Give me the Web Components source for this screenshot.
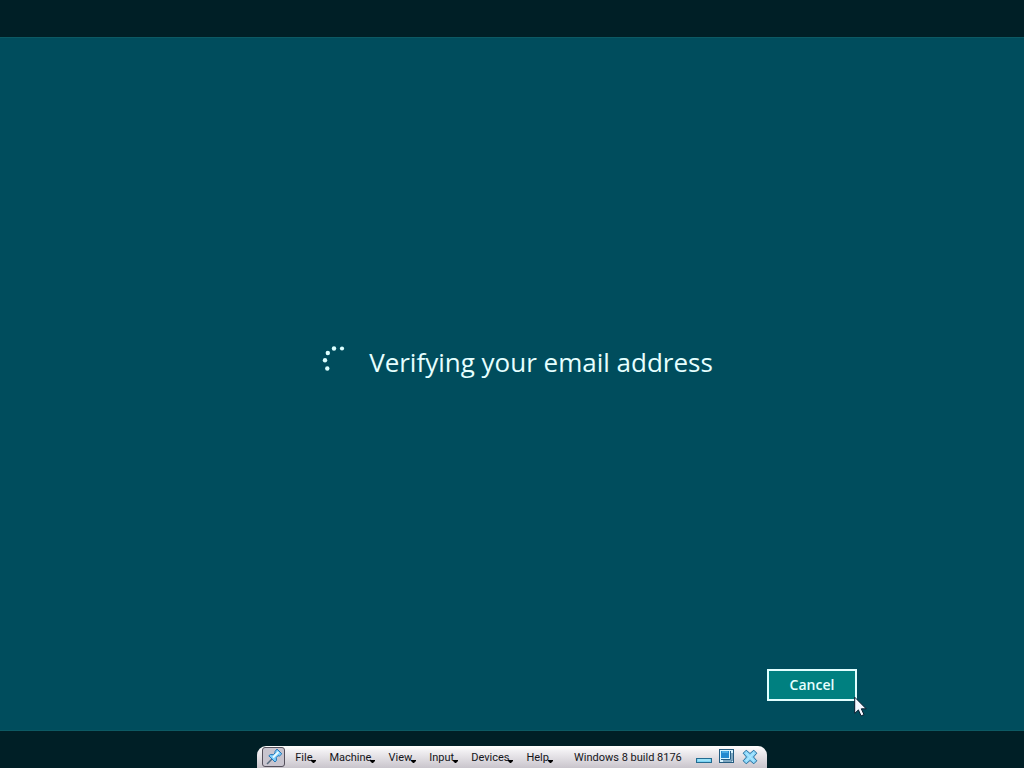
<!DOCTYPE html>
<html lang="en">
<head>
<meta charset="utf-8">
<title>Windows 8 build 8176</title>
<style>
html, body { height: 100%; margin: 0; }
body { background: #004d5d; overflow: hidden; }
</style>
</head>
<body>
<setup-screen></setup-screen>
<script>
const define = (name, html, setup) => customElements.define(name, class extends HTMLElement {
  constructor() {
    super();
    this.attachShadow({ mode: 'open' }).innerHTML = html;
    if (setup) setup(this);
  }
});

define('progress-ring', `
<style>
:host { display: block; flex: none; width: 48px; height: 40px; }
svg { display: block; fill: #dcffff; }
</style>
<svg width="48" height="40" viewBox="0 0 48 40" role="img" aria-label="In progress">
  <circle cx="31" cy="6.5" r="2.1"/><circle cx="23" cy="6.5" r="2.2"/>
  <circle cx="16.8" cy="11" r="2.2"/><circle cx="14" cy="18.2" r="2.2"/>
  <circle cx="16.3" cy="26.5" r="2.2"/>
</svg>`);

define('status-message', `
<style>
:host { display: flex; align-items: center; justify-content: center; gap: 10px; }
h1 { margin: 0; font: 400 26px/40px "Open Sans", "Noto Sans", sans-serif; color: #e6ffff; white-space: nowrap; }
</style>
<progress-ring></progress-ring><h1><slot></slot></h1>`);

define('action-button', `
<style>
:host { display: block; position: relative; }
button { display: block; min-width: 90px; height: 32px; padding: 0 16px; border: 2px solid #e0ffff;
  background: #008080; color: #e6ffff; font: 600 14px/28px "Open Sans", "Noto Sans", sans-serif; }
svg { position: absolute; left: calc(100% - 3px); top: 27px; }
</style>
<button type="button"><slot></slot></button>
<svg width="13" height="21" viewBox="0 0 13 21" aria-hidden="true">
  <path d="M.7 1.2v16.2l3.7-3.5 2.7 6 2.9-1.3-2.7-5.8h4.9z" fill="#f4f8ff" stroke="#061a2c" stroke-width="1"/>
</svg>`);

define('menu-button', `
<style>
:host { display: block; }
button { display: flex; align-items: flex-end; padding: 0; border: 0; background: none; color: #15151a;
  font: 11px/20px Roboto, "DejaVu Sans", sans-serif; }
svg { margin: 0 0 5px -1px; }
</style>
<button type="button" aria-haspopup="menu"><slot></slot><svg width="5" height="3" viewBox="0 0 5 3" aria-hidden="true"><path d="M0 0h5v1L3 3H2L0 1z" fill="#000"/></svg></button>`);

const icons = {
  pin: `<svg width="18" height="18" viewBox="0 0 18 18"><path d="M2 16 7 11" stroke="#566b7d" stroke-width="1.5"/><path d="m10 3.500 2-2.500 4.800 4.800-2.300 2.200-1.500-.3-1.700 1.800.2 2.800-1.500 1.700-6.200-6.200L5.500 6.500l2.800.2L10 5z" fill="#7bccfa" stroke="#2478b9" stroke-linejoin="round"/><path d="m8 9.500 5.500-5.500" stroke="#e8faff" stroke-width="2"/></svg>`,
  minimize: `<svg width="16" height="16" viewBox="0 0 16 16"><rect x=".5" y="9.500" width="15" height="4" fill="#7bd3f4" stroke="#236b91"/><path d="M2 11h12" stroke="#b9f1ff"/></svg>`,
  restore: `<svg width="16" height="16" viewBox="0 0 16 16"><rect x=".5" y=".5" width="14" height="13" fill="#d8f4ff" stroke="#245b80"/><rect x="2" y="2" width="8" height="7" fill="#2389cf"/><path d="M3 3h6" stroke="#73cdf5"/><path d="M11.500 2v8.500H2M4 12h9V4" fill="none" stroke="#285f86"/></svg>`,
  close: `<svg width="16" height="16" viewBox="0 0 16 16"><path d="m4.200 1.200 3.800 3.300 3.800-3.300 3 3L11.500 8l3.300 3.800-3 3L8 11.500l-3.800 3.300-3-3L4.500 8 1.200 4.200z" fill="#8bd5f8" stroke="#236f9e" stroke-width="1" stroke-linejoin="round"/><path d="m4 4 8 8M12 4l-8 8" stroke="#a9e7ff" stroke-width="1.500"/></svg>`
};

define('icon-button', `
<style>
:host { display: block; }
button { display: grid; place-items: center; padding: 0; border: 0; background: none; }
:host([pressed]) button { width: 23px; height: 20px; border: 1px solid #55505b; border-radius: 3px; background: #c8c4ce; }
svg { display: block; }
</style>
<button type="button"></button>`);

define('machine-toolbar', `
<style>
:host { display: flex; align-items: center; box-sizing: border-box; height: 22px; padding: 0 9px 0 5px;
  border-radius: 9px 9px 0 0; background: linear-gradient(#fff 0, #f0eef1 25%, #c9c5cc 100%); }
nav { display: flex; gap: 13px; margin-left: 10px; }
nav, .title { padding-top: 2px; }
.title { margin-left: 21px; color: #15151a; font: 11px/20px Roboto, "DejaVu Sans", sans-serif; white-space: nowrap; }
.controls { display: flex; gap: 7px; margin-left: 14px; }
</style>
<icon-button icon="pin" label="Pin toolbar" pressed></icon-button>
<nav aria-label="Machine menu">
  <menu-button>File</menu-button><menu-button>Machine</menu-button><menu-button>View</menu-button>
  <menu-button>Input</menu-button><menu-button>Devices</menu-button><menu-button>Help</menu-button>
</nav>
<span class="title">Windows 8 build 8176</span>
<div class="controls">
  <icon-button icon="minimize" label="Minimize"></icon-button>
  <icon-button icon="restore" label="Restore"></icon-button>
  <icon-button icon="close" label="Close"></icon-button>
</div>`, host => {
  for (const item of host.shadowRoot.querySelectorAll('icon-button')) {
    const button = item.shadowRoot.querySelector('button');
    button.innerHTML = icons[item.getAttribute('icon')];
    button.setAttribute('aria-label', item.getAttribute('label'));
  }
});

define('setup-screen', `
<style>
:host { display: grid; grid-template-rows: 37px 1fr 37px; height: 100%; background: #001f26; }
main { display: grid; grid-template-rows: 1fr auto; box-sizing: border-box; padding: 16px 0 29px;
  background: #004d5d; border-top: 1px solid #0c5963; border-bottom: 1px solid #0c5963; }
.actions { display: flex; justify-content: flex-end; padding-right: 167px; }
footer { display: flex; align-items: flex-end; justify-content: center; }
</style>
<header></header>
<main>
  <status-message>Verifying your email address</status-message>
  <div class="actions"><action-button>Cancel</action-button></div>
</main>
<footer><machine-toolbar></machine-toolbar></footer>`);
</script>
</body>
</html>
